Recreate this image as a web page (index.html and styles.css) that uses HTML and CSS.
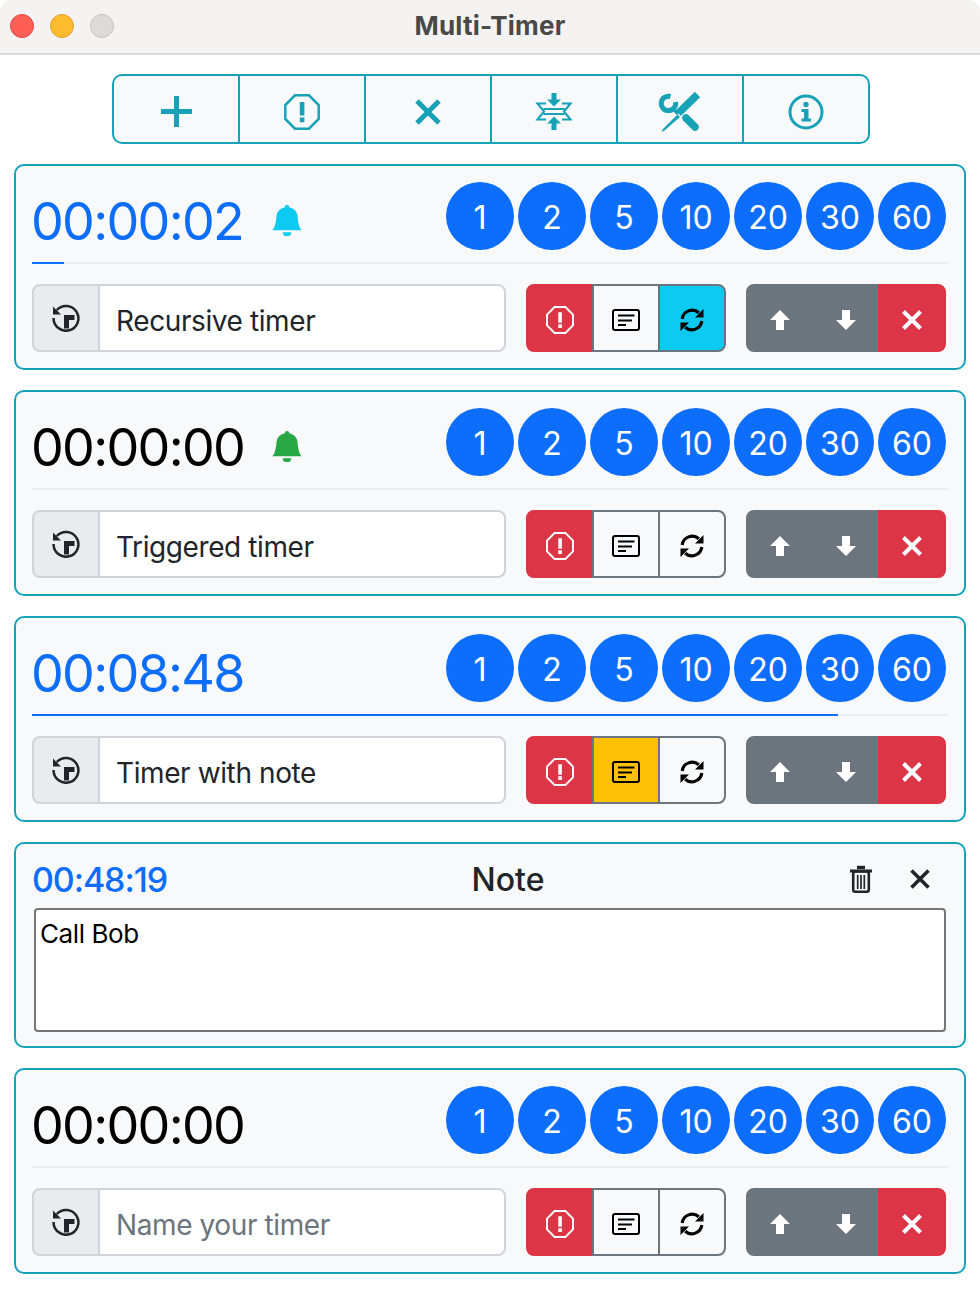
FILE: index.html
```html
<!DOCTYPE html>
<html lang="en">
<head>
<meta charset="utf-8">
<title>Multi-Timer</title>
<link rel="stylesheet" href="styles.css">
</head>
<body>
<svg class="defs" aria-hidden="true">
  <symbol id="i-plus" viewBox="0 0 31 31"><path d="M15.5 0V31M0 15.5H31" fill="none" stroke="currentColor" stroke-width="5"/></symbol>
  <symbol id="i-x" viewBox="0 0 26 26"><path d="M2 2L24 24M24 2L2 24" fill="none" stroke="currentColor" stroke-width="5"/></symbol>
  <symbol id="i-octagon" viewBox="0 0 36 36"><path d="M11 1.3H25L34.7 11V25L25 34.7H11L1.3 25V11Z" fill="none" stroke="currentColor" stroke-width="2.5"/><path d="M15.8 8h4.6v13.5h-4.6zM15.8 23.4h4.6v4.8h-4.6z" fill="currentColor"/></symbol>
  <symbol id="i-collapse" viewBox="0 0 38 40"><path d="M16.5 1h5v6.5H26L19 14.5 12 7.5h4.5zM19 24.5l7 7h-4.5V38h-5v-6.5H12z" fill="currentColor"/><path d="M11 11.5H2.5L9 19.5 2.5 27.5H11M27 11.5H35.5L29 19.5 35.5 27.5H27M8.5 17H29.5M8.5 22H29.5" fill="none" stroke="currentColor" stroke-width="2.1"/></symbol>
  <symbol id="i-tools" viewBox="0 0 44 44"><path d="M39.5 4.5L20.3 23.3" fill="none" stroke="currentColor" stroke-width="7.5"/><path d="M19.5 24.5L22 27 6.5 40.5 3.5 42 5 39Z" fill="currentColor"/><path d="M28 28L37 37" fill="none" stroke="currentColor" stroke-width="7.5" stroke-linecap="round"/><path d="M12.5 6.5A7.2 7.2 0 1 0 17.5 12" fill="none" stroke="currentColor" stroke-width="5"/><path d="M15 19L20 24" fill="none" stroke="currentColor" stroke-width="3"/></symbol>
  <symbol id="i-info" viewBox="0 0 36 36"><circle cx="18" cy="18" r="16" fill="none" stroke="currentColor" stroke-width="3"/><circle cx="18" cy="10.5" r="2.7" fill="currentColor"/><path d="M13.5 15H20.5V24.5H23V27.5H13.5V24.5H16V18H13.5Z" fill="currentColor"/></symbol>
  <symbol id="i-bell" viewBox="0 0 16 16" preserveAspectRatio="none"><path d="M8 16a2 2 0 0 0 2-2H6a2 2 0 0 0 2 2zm.995-14.901a1 1 0 1 0-1.99 0A5.002 5.002 0 0 0 3 6c0 1.098-.5 6-2 7h14c-1.5-1-2-5.902-2-7 0-2.42-1.72-4.44-4.005-4.901z" fill="currentColor"/></symbol>
  <symbol id="i-history" viewBox="0 0 28 28"><path d="M4.8 6A12.4 12.4 0 1 1 1.6 14" fill="none" stroke="currentColor" stroke-width="2.5"/><path d="M1 2.5V10.5H9ZM12 11H22.5V16H17V24.5H12Z" fill="currentColor"/></symbol>
  <symbol id="i-note" viewBox="0 0 28 22"><rect x="1" y="1" width="26" height="20" rx="2" fill="none" stroke="currentColor" stroke-width="2"/><path d="M6 6.5H22.5M6 11.5H20M6 16H14" fill="none" stroke="currentColor" stroke-width="2"/></symbol>
  <symbol id="i-sync" viewBox="0 0 24 24"><path d="M2.2 11A10 10 0 0 1 18.8 4.8M21.8 13A10 10 0 0 1 5.2 19.2" fill="none" stroke="currentColor" stroke-width="3.2"/><path d="M23.5 1V9.5H15ZM.5 23V14.5H9Z" fill="currentColor"/></symbol>
  <symbol id="i-up" viewBox="0 0 20 20"><path d="M10 0L20 10H14V20H6V10H0Z" fill="currentColor"/></symbol>
  <symbol id="i-down" viewBox="0 0 20 20"><path d="M10 20L20 10H14V0H6V10H0Z" fill="currentColor"/></symbol>
  <symbol id="i-close" viewBox="0 0 20 20"><path d="M1.5 1.5L18.5 18.5M18.5 1.5L1.5 18.5" fill="none" stroke="currentColor" stroke-width="4"/></symbol>
  <symbol id="i-close-thin" viewBox="0 0 20 20"><path d="M1.5 1.5L18.5 18.5M18.5 1.5L1.5 18.5" fill="none" stroke="currentColor" stroke-width="3.6"/></symbol>
  <symbol id="i-trash" viewBox="0 0 22 28"><path d="M7 2.5H15" fill="none" stroke="currentColor" stroke-width="3.4"/><path d="M0 6H22" fill="none" stroke="currentColor" stroke-width="3"/><rect x="3.2" y="6.5" width="15.6" height="20.3" rx="2" fill="none" stroke="currentColor" stroke-width="2.6"/><path d="M7.7 10V24M11 10V24M14.3 10V24" fill="none" stroke="currentColor" stroke-width="1.7"/></symbol>
</svg>

<header class="titlebar">
  <div class="lights"><span class="light light-red"></span><span class="light light-yellow"></span><span class="light light-gray"></span></div>
  <div class="title">Multi-Timer</div>
</header>

<nav class="toolbar">
  <button class="tool"><svg class="ic-plus"><use href="#i-plus"/></svg></button>
  <button class="tool"><svg class="ic-36"><use href="#i-octagon"/></svg></button>
  <button class="tool"><svg class="ic-26"><use href="#i-x"/></svg></button>
  <button class="tool"><svg class="ic-collapse"><use href="#i-collapse"/></svg></button>
  <button class="tool"><svg class="ic-tools"><use href="#i-tools"/></svg></button>
  <button class="tool"><svg class="ic-36"><use href="#i-info"/></svg></button>
</nav>

<main class="cards">
  <section class="card">
    <div class="top">
      <div class="clock clock-blue">00:00:02</div>
      <svg class="bell bell-cyan"><use href="#i-bell"/></svg>
      <div class="presets"><button class="preset">1</button><button class="preset">2</button><button class="preset">5</button><button class="preset">10</button><button class="preset">20</button><button class="preset">30</button><button class="preset">60</button></div>
    </div>
    <div class="track"><div class="bar" style="width:3.5%"></div></div>
    <div class="controls">
      <div class="name"><span class="addon"><svg class="ic-history"><use href="#i-history"/></svg></span><input class="name-input" value="Recursive timer" placeholder="Name your timer"></div>
      <div class="group"><button class="btn btn-red"><svg class="ic-28"><use href="#i-octagon"/></svg></button><button class="btn btn-outline"><svg class="ic-note"><use href="#i-note"/></svg></button><button class="btn btn-outline btn-cyan"><svg class="ic-sync"><use href="#i-sync"/></svg></button></div>
      <div class="group group-move"><button class="btn btn-gray"><svg class="ic-20"><use href="#i-up"/></svg></button><button class="btn btn-gray"><svg class="ic-20"><use href="#i-down"/></svg></button><button class="btn btn-red"><svg class="ic-20"><use href="#i-close"/></svg></button></div>
    </div>
  </section>

  <section class="card">
    <div class="top">
      <div class="clock">00:00:00</div>
      <svg class="bell bell-green"><use href="#i-bell"/></svg>
      <div class="presets"><button class="preset">1</button><button class="preset">2</button><button class="preset">5</button><button class="preset">10</button><button class="preset">20</button><button class="preset">30</button><button class="preset">60</button></div>
    </div>
    <div class="track"></div>
    <div class="controls">
      <div class="name"><span class="addon"><svg class="ic-history"><use href="#i-history"/></svg></span><input class="name-input" value="Triggered timer" placeholder="Name your timer"></div>
      <div class="group"><button class="btn btn-red"><svg class="ic-28"><use href="#i-octagon"/></svg></button><button class="btn btn-outline"><svg class="ic-note"><use href="#i-note"/></svg></button><button class="btn btn-outline"><svg class="ic-sync"><use href="#i-sync"/></svg></button></div>
      <div class="group group-move"><button class="btn btn-gray"><svg class="ic-20"><use href="#i-up"/></svg></button><button class="btn btn-gray"><svg class="ic-20"><use href="#i-down"/></svg></button><button class="btn btn-red"><svg class="ic-20"><use href="#i-close"/></svg></button></div>
    </div>
  </section>

  <section class="card">
    <div class="top">
      <div class="clock clock-blue">00:08:48</div>
      <div class="presets"><button class="preset">1</button><button class="preset">2</button><button class="preset">5</button><button class="preset">10</button><button class="preset">20</button><button class="preset">30</button><button class="preset">60</button></div>
    </div>
    <div class="track"><div class="bar" style="width:88%"></div></div>
    <div class="controls">
      <div class="name"><span class="addon"><svg class="ic-history"><use href="#i-history"/></svg></span><input class="name-input" value="Timer with note" placeholder="Name your timer"></div>
      <div class="group"><button class="btn btn-red"><svg class="ic-28"><use href="#i-octagon"/></svg></button><button class="btn btn-outline btn-yellow"><svg class="ic-note"><use href="#i-note"/></svg></button><button class="btn btn-outline"><svg class="ic-sync"><use href="#i-sync"/></svg></button></div>
      <div class="group group-move"><button class="btn btn-gray"><svg class="ic-20"><use href="#i-up"/></svg></button><button class="btn btn-gray"><svg class="ic-20"><use href="#i-down"/></svg></button><button class="btn btn-red"><svg class="ic-20"><use href="#i-close"/></svg></button></div>
    </div>
  </section>

  <section class="card card-note">
    <div class="note-head">
      <div class="note-clock">00:48:19</div>
      <div class="note-title">Note</div>
      <svg class="ic-trash"><use href="#i-trash"/></svg>
      <svg class="ic-20 note-close"><use href="#i-close-thin"/></svg>
    </div>
    <textarea class="note-text">Call Bob</textarea>
  </section>

  <section class="card">
    <div class="top">
      <div class="clock">00:00:00</div>
      <div class="presets"><button class="preset">1</button><button class="preset">2</button><button class="preset">5</button><button class="preset">10</button><button class="preset">20</button><button class="preset">30</button><button class="preset">60</button></div>
    </div>
    <div class="track"></div>
    <div class="controls">
      <div class="name"><span class="addon"><svg class="ic-history"><use href="#i-history"/></svg></span><input class="name-input" placeholder="Name your timer"></div>
      <div class="group"><button class="btn btn-red"><svg class="ic-28"><use href="#i-octagon"/></svg></button><button class="btn btn-outline"><svg class="ic-note"><use href="#i-note"/></svg></button><button class="btn btn-outline"><svg class="ic-sync"><use href="#i-sync"/></svg></button></div>
      <div class="group group-move"><button class="btn btn-gray"><svg class="ic-20"><use href="#i-up"/></svg></button><button class="btn btn-gray"><svg class="ic-20"><use href="#i-down"/></svg></button><button class="btn btn-red"><svg class="ic-20"><use href="#i-close"/></svg></button></div>
    </div>
  </section>
</main>
</body>
</html>
```
FILE: styles.css
```css
* { box-sizing: border-box; }
html, body { margin: 0; padding: 0; background: #fff; overflow: hidden; }
body { font-family: Inter, "Liberation Sans", sans-serif; color: #212529; }
button { font-family: inherit; padding: 0; margin: 0; cursor: pointer; display: flex; align-items: center; justify-content: center; }
svg { display: block; flex: none; }
.defs { width: 0; height: 0; position: absolute; }

.titlebar { height: 55px; background: #f4f3f1; border-bottom: 2px solid #dcdcdc; border-radius: 12px 12px 0 0; display: flex; align-items: center; justify-content: center; position: relative; padding-bottom: 3px; }
.lights { position: absolute; left: 10px; top: 14px; display: flex; gap: 16px; }
.light { width: 24px; height: 24px; border-radius: 50%; border: 1px solid; }
.light-red { background: #ff5f57; border-color: #e2463f; }
.light-yellow { background: #febc2e; border-color: #e1a12a; }
.light-gray { background: #dcdbd9; border-color: #c4c3c1; }
.title { font-size: 26px; font-weight: 700; letter-spacing: .2px; color: #4a4948; }

.toolbar { display: flex; justify-content: center; margin: 19px 0 20px; padding-left: 2px; }
.tool { width: 128px; height: 70px; margin-left: -2px; padding-top: 5px; background: #f8f9fa; border: 2px solid #17a2b8; color: #17a2b8; }
.tool:first-child { margin-left: 0; border-radius: 10px 0 0 10px; }
.tool:last-child { border-radius: 0 10px 10px 0; }
.ic-plus { width: 31px; height: 31px; }
.ic-36 { width: 36px; height: 36px; }
.ic-26 { width: 26px; height: 26px; }
.ic-collapse { width: 38px; height: 40px; }
.ic-tools { width: 44px; height: 44px; }
.ic-28 { width: 28px; height: 28px; }
.ic-20 { width: 20px; height: 20px; }
.ic-history { width: 28px; height: 28px; }
.ic-note { width: 28px; height: 22px; }
.ic-sync { width: 24px; height: 24px; }
.ic-trash { width: 22px; height: 28px; color: #212529; }

.cards { margin: 0 14px; display: flex; flex-direction: column; gap: 20px; }
.card { height: 206px; border: 2px solid #17a2b8; border-radius: 10px; background: #f8f9fa; padding: 16px; }

.top { display: flex; align-items: center; height: 68px; padding-right: 2px; }
.clock { width: 238px; font-size: 52px; font-weight: 400; letter-spacing: -1.7px; color: #000; line-height: 68px; margin-top: 12px; text-indent: -1px; }
.clock-blue { color: #0d6efd; }
.bell { width: 34px; height: 31px; margin-top: 8px; }
.bell-cyan { color: #0dcaf0; }
.bell-green { color: #28a745; }
.presets { margin-left: auto; display: flex; gap: 4px; }
.preset { width: 68px; height: 68px; border: 0; border-radius: 50%; padding-top: 2px; background: #0d6efd; color: #fff; font-size: 32px; font-weight: 400; }

.track { height: 2px; background: #e9ecef; margin: 12px 0 20px; }
.bar { height: 2px; background: #0d6efd; }

.controls { display: flex; padding-right: 2px; }
.name { display: flex; flex: 1; min-width: 0; height: 68px; }
.addon { flex: none; width: 68px; background: #e9ecef; border: 2px solid #ced4da; border-radius: 8px 0 0 8px; display: flex; align-items: center; justify-content: center; color: #212529; }
.name-input { flex: 1; width: 100%; min-width: 0; margin-left: -2px; border: 2px solid #ced4da; border-radius: 0 8px 8px 0; background: #fff; padding: 5px 16px 0; font: 400 28px Inter, "Liberation Sans", sans-serif; letter-spacing: -0.4px; color: #212529; outline: none; }
.name-input::placeholder { color: #6c757d; opacity: 1; }

.group { display: flex; flex: none; margin-left: 20px; }
.btn { width: 68px; height: 68px; margin-left: -2px; padding-top: 4px; border: 2px solid #6c757d; color: #000; background: transparent; }
.btn:first-child { margin-left: 0; border-radius: 8px 0 0 8px; }
.btn:last-child { border-radius: 0 8px 8px 0; }
.btn-red { background: #dc3545; border-color: #dc3545; color: #fff; }
.btn-gray { background: #6c757d; color: #fff; }
.btn-cyan { background: #0dcaf0; }
.btn-yellow { background: #ffc107; }

.note-head { display: flex; align-items: center; height: 38px; padding-right: 18px; position: relative; }
.note-clock { font-size: 34px; font-weight: 500; letter-spacing: -1.1px; color: #0d6efd; }
.note-title { font-size: 32px; font-weight: 500; color: #212529; position: absolute; left: 0; right: 0; padding-left: 36px; text-align: center; }
.ic-trash { margin-left: auto; }
.note-close { margin-left: 38px; color: #212529; }
.note-text { display: block; width: 912px; height: 124px; margin: 10px 0 0 2px; border: 2px solid #767676; border-radius: 4px; background: #fff; padding: 8px 4px; font: 400 26px/1.2 Inter, "Liberation Sans", sans-serif; letter-spacing: -0.4px; color: #000; resize: none; outline: none; }
```
